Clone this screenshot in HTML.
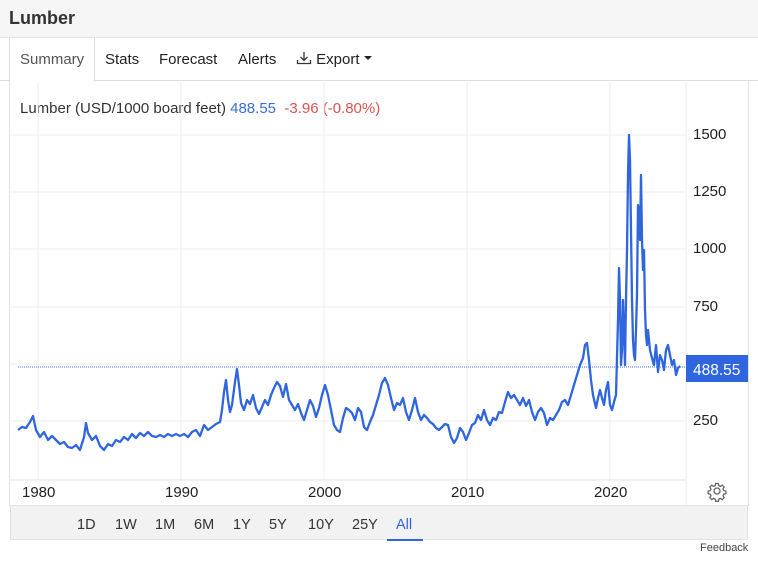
<!DOCTYPE html>
<html><head><meta charset="utf-8"><style>
*{margin:0;padding:0;box-sizing:border-box}
body{width:758px;height:566px;background:#fff;font-family:"Liberation Sans",Arial,sans-serif;position:relative;overflow:hidden;color:#222}
.hdr{position:absolute;left:0;top:0;width:758px;height:38px;background:#f5f5f5;border-bottom:1px solid #e2e2e2}
.hdr span{position:absolute;left:9px;top:8px;font-weight:bold;font-size:18px;color:#333}
.tabs{position:absolute;top:38px;left:0;width:758px;height:43px;border-bottom:1px solid #ddd}
.tab{position:absolute;top:13px;font-size:15px;color:#222}
.active{position:absolute;left:9px;top:38px;width:86px;height:44px;background:#fff;border:1px solid #ddd;border-bottom:none;border-top:none}
.t{position:absolute;font-size:15px;white-space:nowrap}
.ax{position:absolute;font-size:15px;color:#222}
.bb{position:absolute;left:10px;top:505px;width:738px;height:35px;background:#f2f2f2;border:1px solid #e3e3e3}
.rb{position:absolute;top:11px;font-size:14.5px;color:#333}
</style></head><body>
<div class="hdr"><span>Lumber</span></div>
<div class="tabs">
<div class="tab" style="left:105px">Stats</div>
<div class="tab" style="left:159px">Forecast</div>
<div class="tab" style="left:238px">Alerts</div>
<div class="tab" style="left:296px"><svg width="16" height="14" viewBox="0 0 16 14" style="vertical-align:-1px"><path d="M8 1v8M4.5 6l3.5 3.5L11.5 6M1.5 9v3.5h13V9" fill="none" stroke="#333" stroke-width="1.3"/></svg> Export <svg width="8" height="5" viewBox="0 0 8 5" style="vertical-align:3px"><path d="M0 0h8L4 4z" fill="#222"/></svg></div>
</div>
<div class="active"><div class="tab" style="left:10px;color:#555">Summary</div></div>
<div style="position:absolute;left:9px;top:81px;width:1px;height:425px;background:#e3e3e3"></div>
<div style="position:absolute;left:748px;top:81px;width:1px;height:425px;background:#e3e3e3"></div>
<div class="t" style="left:20px;top:100px;color:#333">Lumber (USD/1000 board feet) <span style="color:#3b6fd4">488.55</span>&nbsp; <span style="color:#d9534f">-3.96 (-0.80%)</span></div>
<svg style="position:absolute;left:0;top:0" width="758" height="566">
<g stroke="#eee" stroke-width="1">
<line x1="10" y1="135" x2="686" y2="135"/><line x1="10" y1="192" x2="686" y2="192"/><line x1="10" y1="249" x2="686" y2="249"/><line x1="10" y1="307" x2="686" y2="307"/><line x1="10" y1="364" x2="686" y2="364"/><line x1="10" y1="421" x2="686" y2="421"/>
<line x1="38" y1="82" x2="38" y2="480"/><line x1="181" y1="82" x2="181" y2="480"/><line x1="324" y1="82" x2="324" y2="480"/><line x1="467" y1="82" x2="467" y2="480"/><line x1="610" y1="82" x2="610" y2="480"/>
</g>
<line x1="10" y1="480" x2="686" y2="480" stroke="#e3e3e3"/>
<line x1="686" y1="82" x2="686" y2="505" stroke="#eee"/>
<line x1="18" y1="367" x2="686" y2="367" stroke="#3b6fd4" stroke-width="1" stroke-dasharray="1,1"/>
<polyline fill="none" stroke="#2f66e0" stroke-width="2.3" stroke-linejoin="round" points="18,430 22,427 26,428 30,422 33,416 36,430 40,437 44,432 48,440 52,436 56,440 60,444 64,442 68,447 72,448 76,445 80,450 84,437 86,423 88,433 92,440 96,436 100,446 104,450 108,444 112,446 116,440 120,442 124,437 128,440 132,434 136,438 140,433 144,436 148,432 152,436 156,437 160,435 164,437 168,434 172,436 176,434 180,436 184,434 188,437 192,432 196,430 200,436 204,425 208,430 212,427 216,424 220,422 222,410 224,392 226,380 228,400 230,412 232,405 235,382 237,369 239,385 241,403 244,410 247,400 250,404 253,395 256,408 259,414 262,407 265,400 268,405 271,395 274,388 277,382 280,386 283,397 286,384 289,400 292,405 295,410 298,404 301,413 304,420 307,410 310,400 313,406 316,417 319,408 322,395 325,385 328,395 331,410 334,425 337,430 340,432 343,418 346,408 349,410 352,413 355,420 358,408 361,412 364,427 367,430 370,422 373,415 376,405 379,395 382,383 385,378 388,385 391,398 394,410 397,403 400,405 403,398 406,412 409,420 412,410 415,398 418,412 421,420 424,415 427,418 430,422 433,424 436,428 439,430 442,427 445,424 448,425 451,437 454,443 457,438 460,428 463,432 466,440 469,433 472,425 475,423 478,415 481,420 484,410 487,420 490,425 493,418 496,420 499,412 502,413 505,402 508,392 511,398 514,395 517,400 520,405 523,398 526,406 529,400 532,412 535,420 538,412 541,408 544,413 547,425 550,418 553,420 556,415 559,410 562,402 565,400 568,405 571,395 574,385 577,375 580,365 583,358 585,345 587,343 589,360 591,380 593,395 596,408 598,398 600,390 602,398 604,405 606,390 608,382 610,405 612,410 614,402 616,395 618,320 619,268 620,300 621,365 622,350 623,300 624,330 625,365 626,300 627,250 628,175 629,135 630,160 631,230 632,300 633,340 634,355 635,360 636,330 637,295 638,205 639,215 640,240 641,175 642,240 643,270 644,250 645,310 646,335 647,345 648,330 650,350 652,358 654,365 656,345 658,372 660,355 662,360 664,370 666,350 668,345 670,355 672,365 674,360 676,375 678,368 680,366"/>
<rect x="686" y="355" width="62" height="27" fill="#2f66e0"/>
<text x="693" y="375" font-family="Liberation Sans,Arial,sans-serif" font-size="15.5" fill="#fff">488.55</text>
<g transform="translate(717,491)" fill="none" stroke="#666" stroke-width="1.3"><circle r="3"/><path d="M-1.3,-7.5h2.6l.5,2.2 1.6,.7 1.9,-1.2 1.9,1.9 -1.2,1.9 .7,1.6 2.2,.5v2.6l-2.2,.5 -.7,1.6 1.2,1.9 -1.9,1.9 -1.9,-1.2 -1.6,.7 -.5,2.2h-2.6l-.5,-2.2 -1.6,-.7 -1.9,1.2 -1.9,-1.9 1.2,-1.9 -.7,-1.6 -2.2,-.5v-2.6l2.2,-.5 .7,-1.6 -1.2,-1.9 1.9,-1.9 1.9,1.2 1.6,-.7z"/></g>
</svg>
<div class="ax" style="left:693px;top:126px">1500</div>
<div class="ax" style="left:693px;top:183px">1250</div>
<div class="ax" style="left:693px;top:240px">1000</div>
<div class="ax" style="left:693px;top:298px">750</div>
<div class="ax" style="left:693px;top:412px">250</div>
<div class="ax" style="left:22px;top:484px">1980</div>
<div class="ax" style="left:165px;top:484px">1990</div>
<div class="ax" style="left:308px;top:484px">2000</div>
<div class="ax" style="left:451px;top:484px">2010</div>
<div class="ax" style="left:594px;top:484px">2020</div>
<div class="bb">
<div class="rb" style="left:66px">1D</div><div class="rb" style="left:104px">1W</div><div class="rb" style="left:144px">1M</div><div class="rb" style="left:183px">6M</div><div class="rb" style="left:222px">1Y</div><div class="rb" style="left:258px">5Y</div><div class="rb" style="left:297px">10Y</div><div class="rb" style="left:341px">25Y</div>
<div class="rb" style="left:385px;color:#2f66e0">All</div>
<div style="position:absolute;left:376px;top:33px;width:36px;height:2px;background:#2f66e0"></div>
</div>
<div style="position:absolute;left:700px;top:542px;font-size:11px;color:#444">Feedback</div>
</body></html>
